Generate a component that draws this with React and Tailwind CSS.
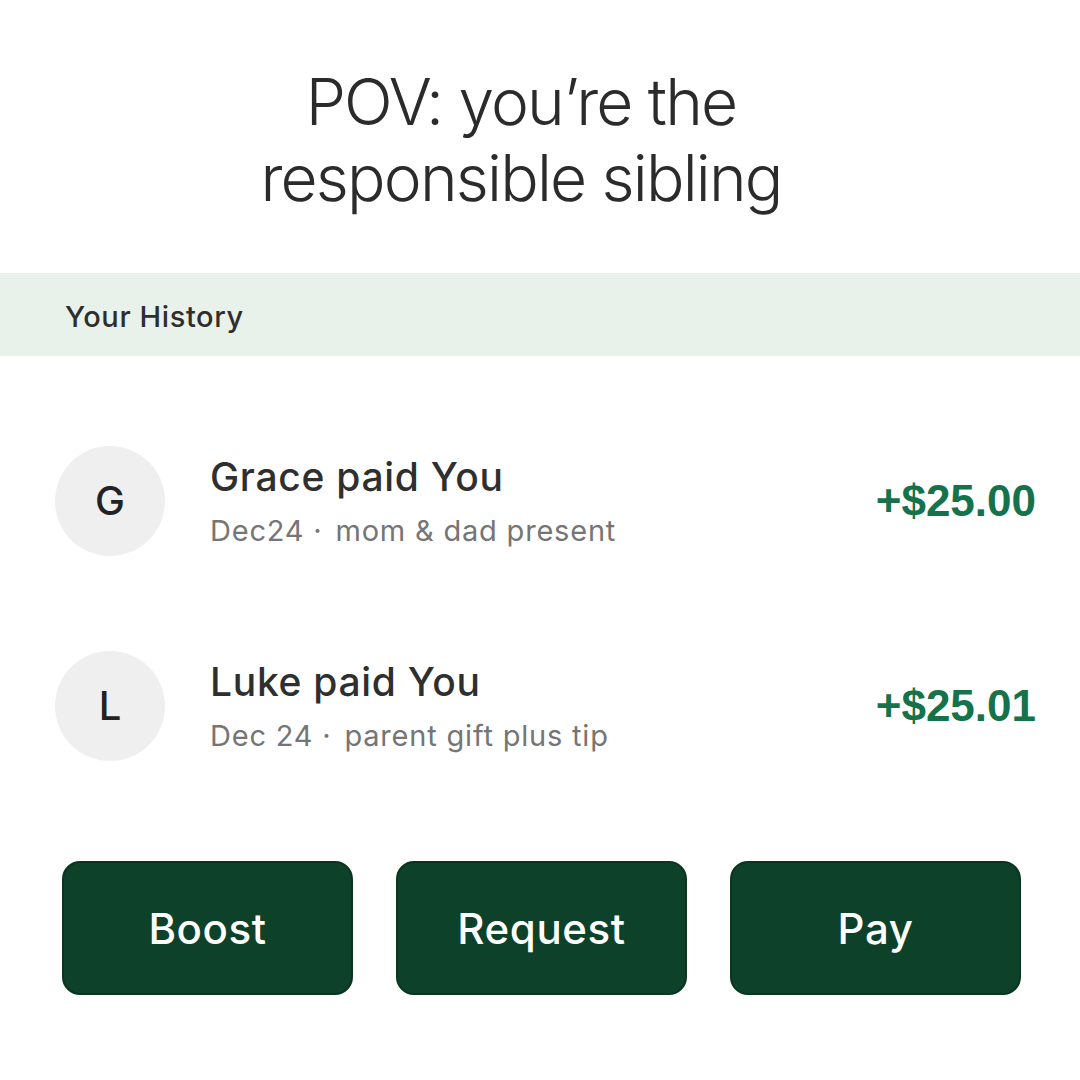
import React from "react";

const rows = [
  { initial: "G", title: "Grace paid You", date: "Dec24", note: "mom & dad present", amount: "+$25.00" },
  { initial: "L", title: "Luke paid You", date: "Dec 24", note: "parent gift plus tip", amount: "+$25.01" },
];

const buttons = ["Boost", "Request", "Pay"];

export default function App() {
  return (
    <div className="w-[1080px] h-[1080px] bg-white flex flex-col font-['Inter','Liberation_Sans',sans-serif] text-[#2f2f2f]">
      {/* heading */}
      <div className="pt-[64px] h-[273px] pr-[38px] text-center font-light text-[64px] leading-[76px] tracking-[-1.8px] text-[#2b2b2b]">
        POV: you’re the
        <br />
        responsible sibling
      </div>

      <div className="h-[83px] bg-[#e8f2eb] flex items-center pl-[65px] pt-[4px] text-[29px] font-medium tracking-[0.6px] text-[#2e2e2e]">
        Your History
      </div>

      <div className="flex flex-col pt-[90px]">
        {rows.map((r) => (
          <div key={r.title} className="h-[205px] flex items-start pl-[55px] pr-[44px]">
            <div className="w-[110px] h-[110px] rounded-full bg-[#efefef] flex items-center justify-center text-[40px] font-medium text-[#222]">
              {r.initial}
            </div>
            <div className="ml-[45px] flex-1 flex flex-col pt-[8px]">
              <div className="text-[39px] leading-[46px] font-medium tracking-[0.7px] text-[#2f2f2f]">{r.title}</div>
              <div className="text-[29px] leading-[36px] tracking-[0.8px] text-[#757575] mt-[13px]">
                {r.date} <span className="mr-[4px]">·</span> {r.note}
              </div>
            </div>
            <div className="pt-[22px] text-[44px] font-bold font-['Liberation_Sans',Arial,sans-serif] text-[#15724a]">{r.amount}</div>
          </div>
        ))}
      </div>

      <div className="flex gap-[43px] pl-[62px] pt-[5px]">
        {buttons.map((b) => (
          <div
            key={b}
            className="w-[291px] h-[134px] rounded-[18px] bg-[#0d4129] border-2 border-[#0a3521] flex items-center justify-center text-white text-[42px] font-medium tracking-[0.6px]"
          >
            {b}
          </div>
        ))}
      </div>
    </div>
  );
}
